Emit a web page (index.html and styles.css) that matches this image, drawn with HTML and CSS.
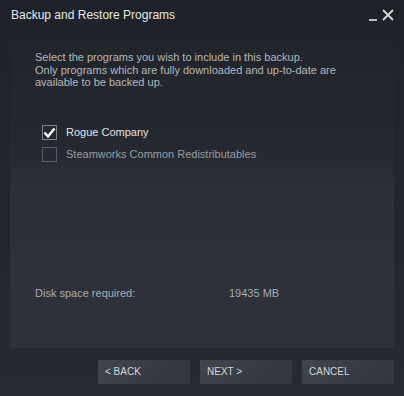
FILE: index.html
```
<!DOCTYPE html>
<html>
<head>
<meta charset="utf-8">
<link rel="stylesheet" href="styles.css">
</head>
<body>
<div class="window">
  <div class="titlebar">
    <span class="title">Backup and Restore Programs</span>
    <div class="controls">
      <svg class="icon" width="12" height="14" viewBox="0 0 12 14"><rect x="2" y="11" width="8" height="2" fill="#b9bcc1"/></svg>
      <svg class="icon" width="14" height="14" viewBox="0 0 14 14"><path d="M2 2 L12 12 M12 2 L2 12" stroke="#d6d8db" stroke-width="1.8"/></svg>
    </div>
  </div>
  <div class="panel">
    <p class="intro">Select the programs you wish to include in this backup.<br>Only programs which are fully downloaded and up-to-date are<br>available to be backed up.</p>
    <ul class="list">
      <li class="item checked">
        <span class="box"><svg width="13" height="13" viewBox="0 0 13 13"><path d="M1.5 6.5 L5 10.5 L11.5 2.5" fill="none" stroke="#ffffff" stroke-width="2.4"/></svg></span>
        <span class="label">Rogue Company</span>
      </li>
      <li class="item">
        <span class="box"></span>
        <span class="label">Steamworks Common Redistributables</span>
      </li>
    </ul>
    <div class="disk">
      <span class="disk-label">Disk space required:</span>
      <span class="disk-value">19435 MB</span>
    </div>
  </div>
  <div class="footer">
    <button class="btn">&lt; BACK</button>
    <button class="btn">NEXT &gt;</button>
    <button class="btn">CANCEL</button>
  </div>
</div>
</body>
</html>
```
FILE: styles.css
```
html, body {
  margin: 0;
  padding: 0;
  background: #23262d;
}
.window {
  width: 404px;
  height: 396px;
  display: flex;
  flex-direction: column;
  background: linear-gradient(180deg, #1f2128 0%, #22252c 40%, #272a31 100%);
  font-family: "Liberation Sans", Arial, sans-serif;
  box-sizing: border-box;
}
.titlebar {
  height: 40px;
  display: flex;
  align-items: flex-start;
  justify-content: space-between;
  padding: 8px 11px 0 11px;
  box-sizing: border-box;
}
.title {
  color: #e6e7e9;
  font-size: 12px;
  line-height: 14px;
}
.controls {
  display: flex;
  gap: 2px;
  margin-right: -2px;
}
.icon {
  display: block;
}
.panel {
  margin: 0 10px;
  height: 308px;
  display: flex;
  flex-direction: column;
  padding: 11px 25px 48px 25px;
  box-sizing: border-box;
  background: linear-gradient(180deg, #22242b 0%, #25282f 35%, #2d3038 50%, #2e3139 100%);
}
.intro {
  margin: 0;
  color: #b4b7bc;
  font-size: 11px;
  line-height: 12.5px;
}
.list {
  list-style: none;
  margin: 36px 0 0 7px;
  padding: 0;
  display: flex;
  flex-direction: column;
  gap: 7px;
}
.item {
  display: flex;
  align-items: center;
  height: 15px;
}
.box {
  width: 15px;
  height: 15px;
  box-sizing: border-box;
  border: 1px solid #5a5d63;
  display: flex;
  align-items: center;
  justify-content: center;
  margin-right: 9px;
}
.item.checked .box {
  border-color: #80838a;
}
.label {
  font-size: 11px;
  color: #999ca1;
}
.item.checked .label {
  color: #e2e3e5;
}
.disk {
  margin-top: auto;
  display: flex;
  font-size: 11px;
  color: #a9acb1;
  line-height: 13px;
}
.disk-label {
  width: 194px;
}
.footer {
  flex: 1;
  display: flex;
  justify-content: flex-end;
  align-items: flex-start;
  gap: 10px;
  padding: 12px 10px 0 0;
}
.btn {
  width: 92px;
  height: 24px;
  border: none;
  padding: 0 0 1px 7px;
  text-align: left;
  font-family: "Liberation Sans", Arial, sans-serif;
  font-size: 10px;
  color: #d3d6da;
  background: linear-gradient(135deg, #41464e 0%, #373a42 60%, #33363d 100%);
}
```
